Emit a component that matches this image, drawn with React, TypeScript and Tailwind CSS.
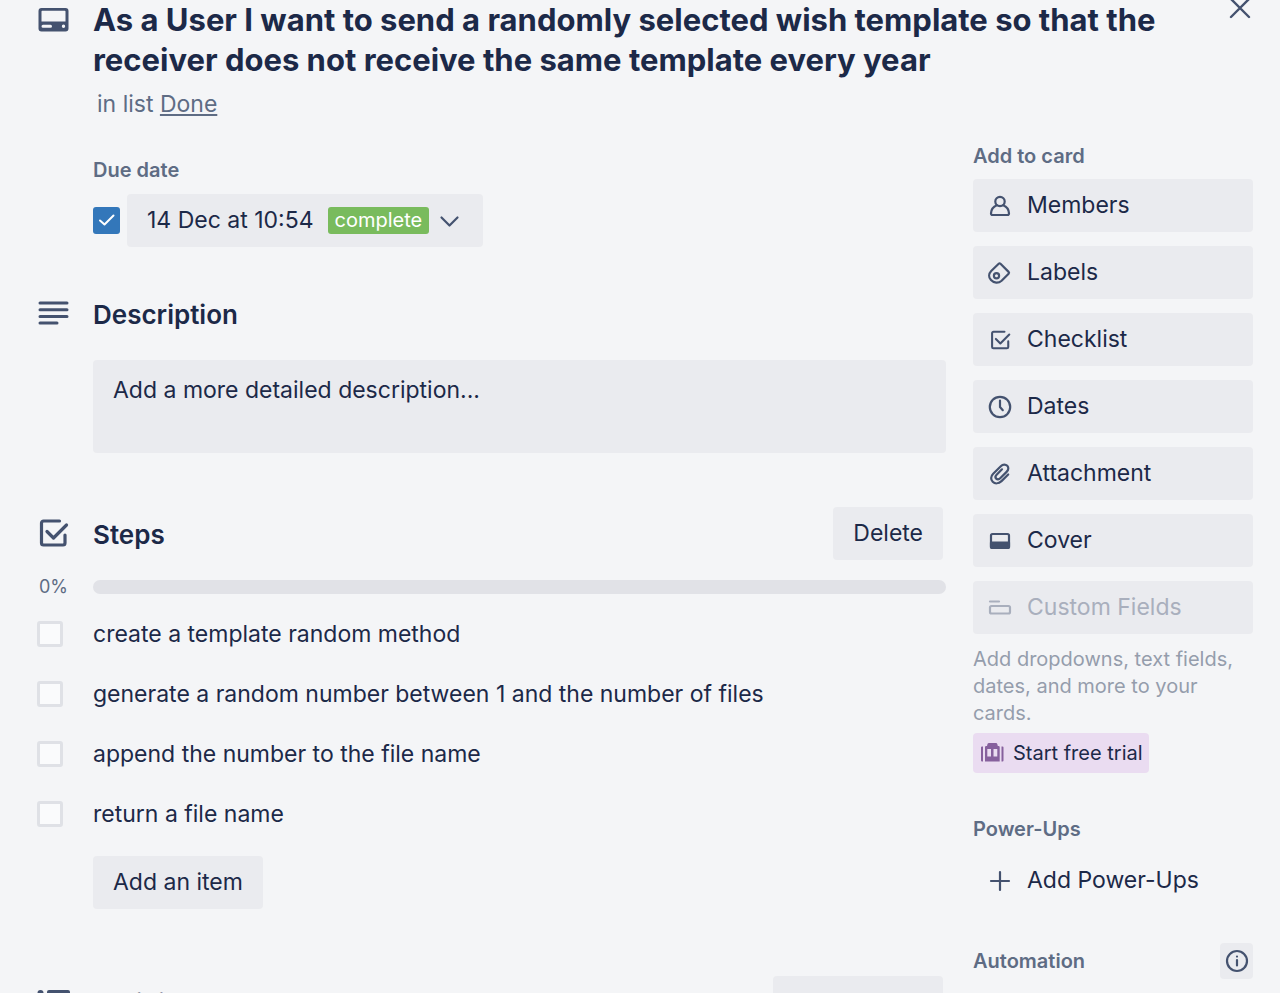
import type { ReactNode } from 'react';

const stroke = {
  fill: 'none',
  stroke: 'currentColor',
  strokeLinecap: 'round' as const,
  strokeLinejoin: 'round' as const,
};

function CardIcon() {
  return (
    <svg width="32" height="26" viewBox="0 0 32 26" aria-hidden="true">
      <path
        fill="currentColor"
        fillRule="evenodd"
        d="M4.500 1h24a3 3 0 0 1 3 3v17.500a3 3 0 0 1-3 3H4.500a3 3 0 0 1-3-3V4a3 3 0 0 1 3-3Zm0 3.500v10h24v-10a.7.7 0 0 0-.7-.7H5.200a.7.700 0 0 0-.7.7ZM6 17.700a1.500 1.500 0 0 0 0 3h7.500a1.500 1.500 0 0 0 0-3ZM26.500 17.500a1.700 1.700 0 1 0 0 3.400 1.700 1.700 0 0 0 0-3.400Z"
      />
    </svg>
  );
}

function LinesIcon() {
  return (
    <svg width="32" height="26" viewBox="0 0 32 26" {...stroke} strokeWidth="3" aria-hidden="true">
      <path d="M3 3h27M3 9.700h27M3 16.400h27M3 23h17" />
    </svg>
  );
}

function CheckIcon({ size, weight }: { size: number; weight: number }) {
  return (
    <svg width={size} height={size} viewBox="0 0 32 32" {...stroke} strokeWidth={weight} aria-hidden="true">
      <path d="M22.500 4H6.500A2 2 0 0 0 4.500 6V26A2 2 0 0 0 6.500 28H26A2 2 0 0 0 28 26V18M10 14.500L16.500 21L29.500 8" />
    </svg>
  );
}

function ActivityIcon() {
  return (
    <svg width="34" height="28" viewBox="0 0 34 28" fill="currentColor" aria-hidden="true">
      <circle cx="3.500" cy="5" r="3" />
      <circle cx="3.500" cy="14" r="3" />
      <circle cx="3.500" cy="24" r="3" />
      <path fillRule="evenodd" d="M12 2h19a2 2 0 0 1 2 2v8a2 2 0 0 1-2 2H12a2 2 0 0 1-2-2V4a2 2 0 0 1 2-2Zm1 3.500v5h17v-5Z" />
      <rect x="10" y="17" width="23" height="3" rx="1.500" />
      <rect x="10" y="23" width="15" height="3" rx="1.500" />
    </svg>
  );
}

function SmallIcon({ children, weight = 2.2 }: { children: ReactNode; weight?: number }) {
  return (
    <svg className="shrink-0" width="26" height="26" viewBox="0 0 26 26" {...stroke} strokeWidth={weight} aria-hidden="true">
      {children}
    </svg>
  );
}

const actions: { label: string; icon: ReactNode; disabled?: boolean }[] = [
  {
    label: 'Members',
    icon: (
      <SmallIcon>
        <circle cx="13" cy="8.500" r="4.700" />
        <path d="M9.800 12.200C6.500 13.500 4.200 16.500 4 20.300Q4 22 5.500 22H20.500Q22 22 22 20.300C21.800 16.500 19.500 13.500 16.200 12.200" />
      </SmallIcon>
    ),
  },
  {
    label: 'Labels',
    icon: (
      <SmallIcon>
        <path d="M11.700 3.800Q12.600 3 13.500 3.800L21.600 11.900Q22.500 12.800 21.600 13.700L14.600 20.700A7.500 7.500 0 0 1 4 20.100C1.300 17.200 1.700 13.600 4.200 11Z" />
        <circle cx="9.500" cy="15.800" r="2.600" />
      </SmallIcon>
    ),
  },
  {
    label: 'Checklist',
    icon: (
      <span className="flex size-[26px] items-center justify-center">
        <CheckIcon size={22} weight={3} />
      </span>
    ),
  },
  {
    label: 'Dates',
    icon: (
      <SmallIcon>
        <circle cx="13" cy="13" r="10.200" />
        <path d="M13 6.500V13L15.800 16.200" />
      </SmallIcon>
    ),
  },
  {
    label: 'Attachment',
    icon: (
      <SmallIcon>
        <path d="M21.200 13.500L14.500 20.100C11.500 23 7.800 22.800 5.700 20.700S3.500 15.500 6.200 12.800L13.800 5.200C16 3 18.800 3.300 20.300 4.800S21.700 8.800 19.600 10.900L13.200 17.300C11.900 18.600 10.200 18.600 9.200 17.600S8.300 15 9.600 13.700L15 8.300" />
      </SmallIcon>
    ),
  },
  {
    label: 'Cover',
    icon: (
      <SmallIcon>
        <rect x="4" y="6" width="18" height="14" rx="1.500" />
        <path fill="currentColor" d="M4 14.500H22V19.500H4Z" />
      </SmallIcon>
    ),
  },
  {
    label: 'Custom Fields',
    disabled: true,
    icon: (
      <SmallIcon>
        <path d="M3 6.500H12" />
        <rect x="3" y="11" width="20" height="7.500" rx="1.500" />
      </SmallIcon>
    ),
  },
];

const steps = [
  'create a template random method',
  'generate a random number between 1 and the number of files',
  'append the number to the file name',
  'return a file name',
];

function SectionHead({ icon, title, action }: { icon: ReactNode; title: string; action?: ReactNode }) {
  return (
    <div className="flex h-[53px] items-center">
      <span className="flex w-14 shrink-0 pb-[2px] text-[#44526f]">{icon}</span>
      <h2 className="flex-1 pt-px text-[26px] font-semibold leading-[27px]">{title}</h2>
      {action}
    </div>
  );
}

export default function App() {
  return (
    <div className="h-screen overflow-y-auto bg-[#f4f5f7] pr-[27px] pl-[37px] font-['Inter','Liberation_Sans',sans-serif] text-[23px] leading-[27px] text-[#1c2948] [scrollbar-width:none]">
      <header className="flex items-start">
        <span className="flex w-14 shrink-0 pt-[7px] text-[#44526f]">
          <CardIcon />
        </span>
        <div className="flex-1">
          <h1 className="text-[31px] font-bold leading-10">
            As a User I want to send a randomly selected wish template so that the receiver does not receive the same
            template every year
          </h1>
          <p className="mt-[11px] pl-1 text-[#5e6c84]">
            in list{' '}
            <a href="#done" className="underline underline-offset-2">
              Done
            </a>
          </p>
        </div>
        <button type="button" aria-label="Close" className="-mt-[5px] ml-9 text-[#44526f]">
          <SmallIcon weight={2.400}>
            <path d="M4 4L22 22M22 4L4 22" />
          </SmallIcon>
        </button>
      </header>

      <div className="mt-[25px] flex gap-[27px]">
        <main className="flex-1 pt-[14px]">
          <section className="pl-14">
            <h3 className="text-[20px] font-semibold text-[#5e6c84]">Due date</h3>
            <div className="mt-[10px] flex items-center gap-[7px]">
              <span className="grid">
                <input
                  type="checkbox"
                  defaultChecked
                  aria-label="Due date complete"
                  className="col-start-1 row-start-1 size-[27px] appearance-none rounded-[3px] bg-[#3377ba]"
                />
                <svg
                  className="pointer-events-none col-start-1 row-start-1 text-white"
                  width="27"
                  height="27"
                  viewBox="0 0 27 27"
                  {...stroke}
                  strokeWidth="2"
                  aria-hidden="true"
                >
                  <path d="M7 13.500L11.500 17.500L20.500 8.500" />
                </svg>
              </span>
              <button type="button" className="flex h-[53px] items-center rounded bg-[#eaebef] px-5">
                14 Dec at 10:54
                <span className="ml-[14px] rounded-[3px] bg-[#79bb5d] px-[7px] text-[20px] text-white">complete</span>
                <svg
                  className="ml-2 text-[#44526f]"
                  width="26"
                  height="26"
                  viewBox="0 0 26 26"
                  {...stroke}
                  strokeWidth="2.200"
                  aria-hidden="true"
                >
                  <path d="M4.500 9.500L12.500 17.500L20.500 9.500" />
                </svg>
              </button>
            </div>
          </section>

          <section className="mt-10">
            <SectionHead icon={<LinesIcon />} title="Description" />
            <button type="button" className="mt-5 ml-14 flex h-[93px] w-[calc(100%-56px)] rounded bg-[#eaebef] px-5 pt-[17px] text-left">
              Add a more detailed description...
            </button>
          </section>

          <section className="mt-[54px]">
            <SectionHead
              icon={<CheckIcon size={32} weight={3.2} />}
              title="Steps"
              action={
                <button type="button" className="mr-[3px] h-[53px] rounded bg-[#eaebef] px-5">
                  Delete
                </button>
              }
            />
            <div className="mt-[13px] flex items-center">
              <span className="w-14 shrink-0 pl-[2px] text-[18px] text-[#5e6c84]">0%</span>
              <div
                role="progressbar"
                aria-label="Steps progress"
                aria-valuenow={0}
                className="h-[14px] flex-1 rounded-full bg-[#e1e2e7]"
              />
            </div>
            <ul className="mt-1">
              {steps.map((step) => (
                <li key={step}>
                  <label className="flex h-[60px] items-center">
                    <input
                      type="checkbox"
                      className="mr-[30px] size-[26px] shrink-0 appearance-none rounded-[3px] border-3 border-[#dfe1e6] bg-[#fafbfc]"
                    />
                    {step}
                  </label>
                </li>
              ))}
            </ul>
            <button type="button" className="mt-3 ml-14 h-[53px] rounded bg-[#eaebef] px-5">
              Add an item
            </button>
          </section>

          <section className="mt-[67px] pb-10">
            <SectionHead
              icon={<ActivityIcon />}
              title="Activity"
              action={
                <button type="button" className="mr-[3px] h-[53px] rounded bg-[#eaebef] px-4 pt-1">
                  Show details
                </button>
              }
            />
          </section>
        </main>

        <aside className="w-[280px] shrink-0">
          <h3 className="text-[20px] font-semibold text-[#5e6c84]">Add to card</h3>
          <div className="mt-[9px] flex flex-col gap-[14px]">
            {actions.map(({ label, icon, disabled }) => (
              <button
                key={label}
                type="button"
                disabled={disabled}
                className="flex h-[53px] items-center gap-[14px] rounded bg-[#eaebef] pl-[14px] disabled:text-[#a9afbd]"
              >
                <span className={disabled ? 'flex text-[#a9afbd]' : 'flex text-[#44526f]'}>{icon}</span>
                {label}
              </button>
            ))}
          </div>
          <p className="mt-3 text-[20px] text-[#959dac]">Add dropdowns, text fields, dates, and more to your cards.</p>
          <button type="button" className="mt-[6px] flex h-10 items-center gap-2 rounded bg-[#eadcf1] px-[6px] text-[20px]">
            <svg width="26" height="24" viewBox="0 0 26 24" className="text-[#86609d]" aria-hidden="true">
              <path
                fill="currentColor"
                fillRule="evenodd"
                d="M10 2H17Q18 2 18.300 3L18.800 5H19.500Q20.700 5 20.700 6V20.500H6V6Q6 5 7.200 5H8L8.500 3Q8.800 2 10 2ZM8.300 8V15.500H12V8ZM14.500 8V15.500H18.300V8ZM3 5.500H4V20.500H3Q2 20.500 2 19.500V6.500Q2 5.500 3 5.500ZM22.500 5.500H23.500Q24.500 5.500 24.500 6.500V19.500Q24.500 20.500 23.500 20.500H22.500Z"
              />
            </svg>
            Start free trial
          </button>

          <h3 className="mt-[43px] text-[20px] font-semibold text-[#5e6c84]">Power-Ups</h3>
          <button type="button" className="mt-[11px] flex h-[53px] w-full items-center gap-[14px] pl-[14px]">
            <span className="flex text-[#44526f]">
              <SmallIcon>
                <path d="M13 4V22M4 13H22" />
              </SmallIcon>
            </span>
            Add Power-Ups
          </button>

          <div className="mt-9 flex items-center justify-between">
            <h3 className="text-[20px] font-semibold text-[#5e6c84]">Automation</h3>
            <button type="button" aria-label="About automation" className="flex h-9 w-[33px] items-center justify-center rounded bg-[#eaebef] text-[#44526f]">
              <SmallIcon>
                <circle cx="13" cy="13" r="10" />
                <path d="M13 12V17.500M13 8.500V8.600" />
              </SmallIcon>
            </button>
          </div>
        </aside>
      </div>
    </div>
  );
}
